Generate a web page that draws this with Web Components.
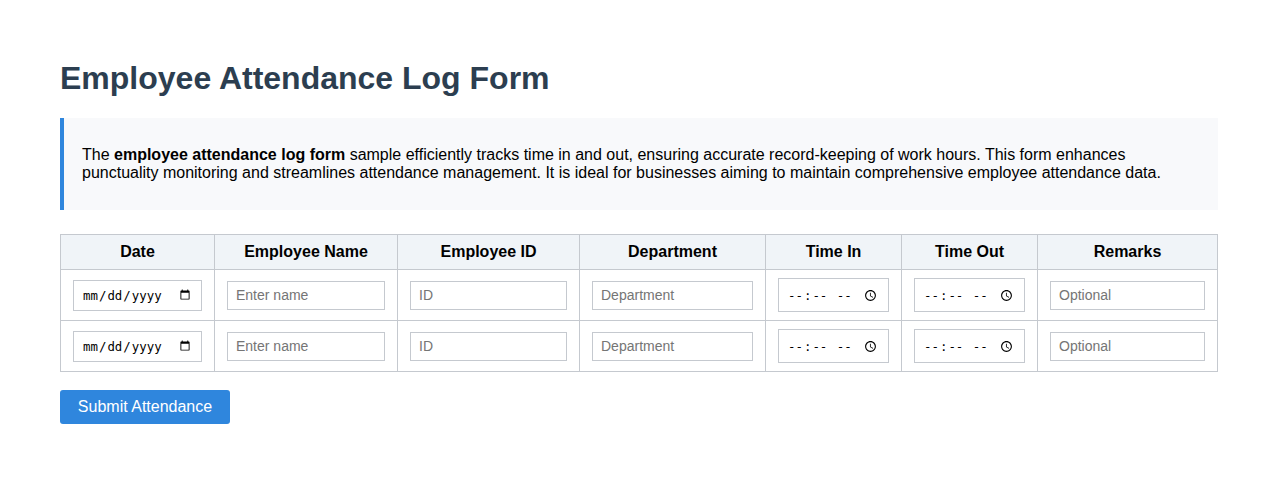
<!DOCTYPE html>
<html lang="en">
<head>
<meta charset="utf-8">
<title>Employee Attendance Log Form</title>
<style>
  html, body { margin: 0; background: #fff; }
  body { font-family: "Liberation Sans", Arial, sans-serif; color: #000; }
</style>
</head>
<body>
<attendance-page>
  <page-title>Employee Attendance Log Form</page-title>
  <intro-note>The <b>employee attendance log form</b> sample efficiently tracks time in and out, ensuring accurate record-keeping of work hours. This form enhances punctuality monitoring and streamlines attendance management. It is ideal for businesses aiming to maintain comprehensive employee attendance data.</intro-note>
  <attendance-table rows="2"></attendance-table>
  <submit-button>Submit Attendance</submit-button>
</attendance-page>

<script>
class AttendancePage extends HTMLElement {
  connectedCallback() {
    const shadowRoot = this.attachShadow({ mode: "open" })
    shadowRoot.innerHTML = `
      <style>
        :host { display: flex; flex-direction: column; align-items: stretch; padding: 60px 60px 0; }
      </style>
      <slot></slot>`
  }
}

class PageTitle extends HTMLElement {
  connectedCallback() {
    const shadowRoot = this.attachShadow({ mode: "open" })
    shadowRoot.innerHTML = `
      <style>
        :host { display: block; }
        h1 { margin: 0 0 21px; font-size: 32px; font-weight: bold; line-height: 37px; color: #2c3e50; }
      </style>
      <h1><slot></slot></h1>`
  }
}

class IntroNote extends HTMLElement {
  connectedCallback() {
    const shadowRoot = this.attachShadow({ mode: "open" })
    shadowRoot.innerHTML = `
      <style>
        :host { display: block; background: #f8f9fb; border-left: 4px solid #2f86dd; padding: 12px 18px; margin-bottom: 24px; }
        p { margin: 16px 0; font-size: 16px; line-height: 18px; }
      </style>
      <p><slot></slot></p>`
  }
}

class AttendanceTable extends HTMLElement {
  connectedCallback() {
    const heads = ["Date", "Employee Name", "Employee ID", "Department", "Time In", "Time Out", "Remarks"]
    const widths = [154, 183, 182, 186, 136, 136, 180]
    const row = `
      <tr>
        <td><input class="date" type="date"></td>
        <td><input type="text" placeholder="Enter name"></td>
        <td><input type="text" placeholder="ID"></td>
        <td><input type="text" placeholder="Department"></td>
        <td><input class="time" type="time"></td>
        <td><input class="time" type="time"></td>
        <td><input type="text" placeholder="Optional"></td>
      </tr>`
    const shadowRoot = this.attachShadow({ mode: "open" })
    shadowRoot.innerHTML = `
      <style>
        :host { display: block; margin-bottom: 18px; }
        table { border-collapse: collapse; table-layout: fixed; width: 1157px; font-family: "Liberation Sans", Arial, sans-serif; }
        th, td { border: 1px solid #c5c9cf; padding: 8px 12px; text-align: center; }
        th { background: #f0f4f8; font-size: 16px; font-weight: bold; line-height: 18px; }
        input { box-sizing: border-box; border: 1px solid #c5c9cf; border-radius: 0; vertical-align: middle; margin: 0; background: #fff; }
        input[type=text] { width: 100%; height: 29px; padding: 6px 8px; font: 14px "Liberation Sans", Arial, sans-serif; }
        input::placeholder { color: #757575; }
        .date { width: 129px; height: 31px; padding: 6px 8px; font-size: 12.4px; font-family: "DejaVu Sans Mono", monospace; }
        .time { width: 111px; height: 34px; padding: 8px; font-size: 12.4px; font-family: "DejaVu Sans Mono", monospace; }
      </style>
      <table>
        <colgroup>${widths.map(w => `<col style="width:${w}px">`).join("")}</colgroup>
        <thead><tr>${heads.map(h => `<th>${h}</th>`).join("")}</tr></thead>
        <tbody>${row.repeat(Number(this.getAttribute("rows")))}</tbody>
      </table>`
  }
}

class SubmitButton extends HTMLElement {
  connectedCallback() {
    const shadowRoot = this.attachShadow({ mode: "open" })
    shadowRoot.innerHTML = `
      <style>
        :host { display: block; }
        button { display: block; width: 170px; height: 34px; padding: 0; border: 0; border-radius: 3px; background: #2f86dd; color: #fff; font: 16px "Liberation Sans", Arial, sans-serif; }
      </style>
      <button type="submit"><slot></slot></button>`
  }
}

customElements.define("attendance-page", AttendancePage)
customElements.define("page-title", PageTitle)
customElements.define("intro-note", IntroNote)
customElements.define("attendance-table", AttendanceTable)
customElements.define("submit-button", SubmitButton)
</script>
</body>
</html>
